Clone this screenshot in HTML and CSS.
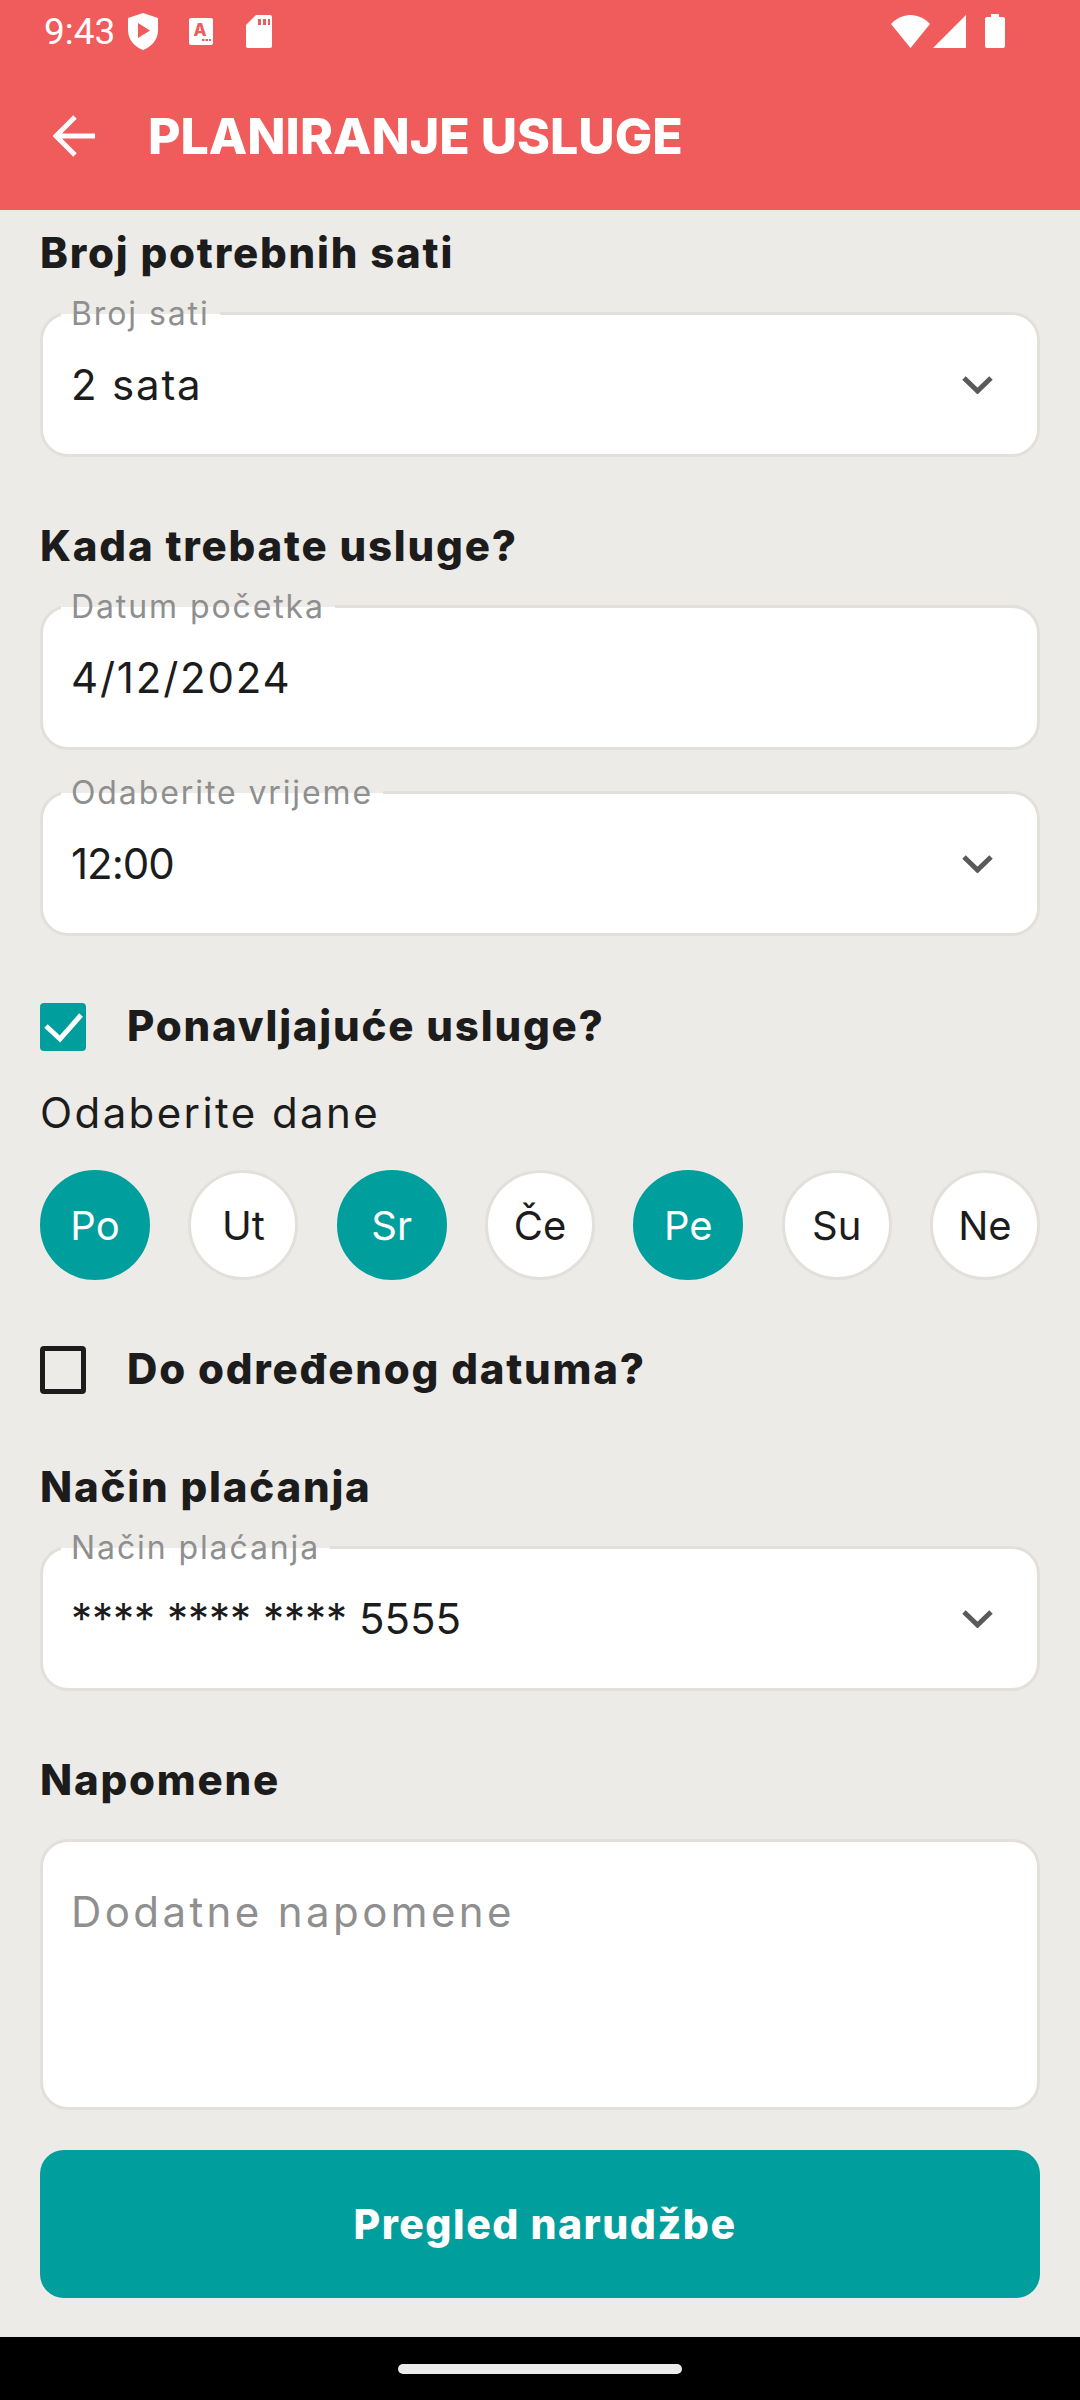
FILE: index.html
```html
<!DOCTYPE html>
<html lang="hr">
<head>
  <meta charset="UTF-8" />
  <meta name="viewport" content="width=device-width, initial-scale=1.0" />
  <title>Planiranje usluge</title>
  <link rel="stylesheet" href="styles.css">
</head>
<body>
  <div class="app">
    <header class="top">
      <div class="status">
        <span class="time">9:43</span>
        <svg class="ic-shield" viewBox="0 0 30 37"><path fill="#fff" d="M15 0 L30 5 V17 C30 27 23 34 15 37 C7 34 0 27 0 17 V5 Z"/><path fill="#f05b5b" d="M10 10 L22 17.5 L10 25 Z"/></svg>
        <svg class="ic-a" viewBox="0 0 24 27"><rect width="24" height="27" rx="2" fill="#fff"/><text x="11" y="18" text-anchor="middle" class="ic-a-text">A</text><path fill="#f05b5b" d="M13 21h2.5v2H13zM16.5 21H19v2h-2.5zM20 21h2v2h-2z"/></svg>
        <svg class="ic-sd" viewBox="0 0 26 33"><path fill="#fff" d="M10 0 H24 a2 2 0 0 1 2 2 V31 a2 2 0 0 1 -2 2 H2 a2 2 0 0 1 -2 -2 V10 Z"/><path fill="#f05b5b" d="M12 4h3v6h-3zM17 4h3v6h-3zM22 4h2v6h-2z"/></svg>
        <span class="spacer"></span>
        <svg class="ic-wifi" viewBox="0 0 39 33"><path fill="#fff" d="M19.5 33 L0 9 C5 3.500 12 0 19.500 0 C27 0 34 3.500 39 9 Z"/></svg>
        <svg class="ic-signal" viewBox="0 0 33 33"><path fill="#fff" d="M33 0 V33 H0 Z"/></svg>
        <svg class="ic-battery" viewBox="0 0 20 34"><path fill="#fff" d="M6 0 H14 V3 H18 a2 2 0 0 1 2 2 V32 a2 2 0 0 1 -2 2 H2 a2 2 0 0 1 -2 -2 V5 a2 2 0 0 1 2 -2 H6 Z"/></svg>
      </div>
      <div class="bar">
        <svg class="ic-back" viewBox="0 0 42 42"><path fill="none" stroke="#fff" stroke-width="5" d="M42 21 H4 M22 2 L3 21 L22 40"/></svg>
        <h1>PLANIRANJE USLUGE</h1>
      </div>
    </header>

    <main class="content">
      <h2>Broj potrebnih sati</h2>
      <div class="field">
        <label>Broj sati</label>
        <span class="value spaced">2 sata</span>
        <svg class="chevron" viewBox="0 0 31 18"><path fill="none" stroke="#5a5a5a" stroke-width="5" d="M2 2 L15.500 15 L29 2"/></svg>
      </div>

      <h2 class="sec">Kada trebate usluge?</h2>
      <div class="field">
        <label>Datum početka</label>
        <span class="value spaced">4/12/2024</span>
      </div>
      <div class="field next">
        <label>Odaberite vrijeme</label>
        <span class="value tight">12:00</span>
        <svg class="chevron" viewBox="0 0 31 18"><path fill="none" stroke="#5a5a5a" stroke-width="5" d="M2 2 L15.500 15 L29 2"/></svg>
      </div>

      <div class="check first">
        <span class="box on"><svg viewBox="0 0 46 48"><path fill="none" stroke="#fff" stroke-width="5" d="M6 23 L20 36 L41 12"/></svg></span>
        <span class="check-text">Ponavljajuće usluge?</span>
      </div>
      <p class="days-title">Odaberite dane</p>
      <div class="days">
        <span class="day on">Po</span>
        <span class="day">Ut</span>
        <span class="day on">Sr</span>
        <span class="day">Če</span>
        <span class="day on">Pe</span>
        <span class="day">Su</span>
        <span class="day">Ne</span>
      </div>
      <div class="check second">
        <span class="box"></span>
        <span class="check-text">Do određenog datuma?</span>
      </div>

      <h2 class="sec">Način plaćanja</h2>
      <div class="field">
        <label>Način plaćanja</label>
        <span class="value">**** **** **** 5555</span>
        <svg class="chevron" viewBox="0 0 31 18"><path fill="none" stroke="#5a5a5a" stroke-width="5" d="M2 2 L15.500 15 L29 2"/></svg>
      </div>

      <h2 class="sec">Napomene</h2>
      <div class="notes">Dodatne napomene</div>

      <button class="submit">Pregled narudžbe</button>
    </main>

    <footer class="nav"><span class="home"></span></footer>
  </div>
</body>
</html>
```

FILE: styles.css
```css
* {
  box-sizing: border-box;
}

body {
  margin: 0;
  font-family: Inter, "Noto Sans", sans-serif;
  background: #ecebe7;
  color: #1c1c1c;
}

.app {
  width: 1080px;
  height: 2400px;
  display: flex;
  flex-direction: column;
}

.top {
  height: 210px;
  background: #f05b5b;
}

.status {
  height: 62px;
  padding: 0 75px 0 44px;
  display: flex;
  align-items: center;
}

.time {
  font-family: Roboto, sans-serif;
  font-size: 37px;
  color: #fff;
  margin-right: 13px;
}

.spacer {
  flex: 1;
}

.ic-shield { width: 30px; height: 37px; margin-right: 31px; }
.ic-a { width: 24px; height: 27px; margin-right: 33px; }
.ic-sd { width: 26px; height: 33px; }
.ic-wifi { width: 39px; height: 33px; margin-right: 3px; }
.ic-signal { width: 33px; height: 33px; margin-right: 19px; }
.ic-battery { width: 20px; height: 34px; }

.ic-a-text {
  font-family: Inter, sans-serif;
  font-size: 17px;
  font-weight: 800;
  fill: #f05b5b;
}

.bar {
  height: 148px;
  padding-left: 53px;
  display: flex;
  align-items: center;
}

.ic-back {
  width: 42px;
  height: 42px;
  margin-right: 53px;
}

h1 {
  margin: 0;
  font-size: 50px;
  font-weight: 800;
  color: #fff;
}

.content {
  flex: 1;
  padding: 12px 40px 0;
}

h2 {
  margin: 0 0 28px;
  height: 62px;
  line-height: 62px;
  font-size: 42px;
  font-weight: 800;
  letter-spacing: 1.8px;
}

h2.sec {
  margin-top: 58px;
}

.field {
  position: relative;
  height: 145px;
  padding: 0 28px;
  display: flex;
  align-items: center;
  justify-content: space-between;
  background: #fff;
  border: 3px solid #e3dfda;
  border-radius: 28px;
}

.field.next {
  margin-top: 41px;
}

.field label {
  position: absolute;
  left: 18px;
  top: -15px;
  padding: 0 10px;
  font-size: 32px;
  line-height: 28px;
  letter-spacing: 1.9px;
  color: #8f8f8f;
  background: linear-gradient(#ecebe7 50%, #fff 50%);
}

.value {
  font-size: 42px;
}

.value.spaced {
  letter-spacing: 1.8px;
}

.value.tight {
  letter-spacing: -1px;
}

.chevron {
  width: 31px;
  height: 18px;
  margin-right: 16px;
}

.check {
  display: flex;
  align-items: center;
  gap: 41px;
  height: 48px;
  font-size: 42px;
  font-weight: 800;
  letter-spacing: 1.8px;
}

.check.first { margin-top: 67px; }
.check.second { margin-top: 66px; margin-bottom: 62px; }

.check-text {
  padding-bottom: 3px;
}

.box {
  width: 46px;
  height: 48px;
  border: 5px solid #1c1c1c;
  border-radius: 4px;
}

.box.on {
  border: 0;
  background: #009e9c;
}

.box svg {
  display: block;
  width: 46px;
  height: 48px;
}

.days-title {
  margin: 46px 0 42px;
  font-size: 42px;
  line-height: 31px;
  letter-spacing: 2.4px;
}

.days {
  display: flex;
  justify-content: space-between;
}

.day {
  width: 110px;
  height: 110px;
  display: flex;
  align-items: center;
  justify-content: center;
  font-size: 40px;
  background: #fff;
  border: 3px solid #e3dfda;
  border-radius: 50%;
}

.day.on {
  color: #fff;
  background: #009e9c;
  border-color: #009e9c;
}

.notes {
  height: 271px;
  padding: 44px 28px 0;
  font-size: 42px;
  letter-spacing: 3.4px;
  color: #8f8f8f;
  background: #fff;
  border: 3px solid #e3dfda;
  border-radius: 28px;
}

.submit {
  display: block;
  width: 100%;
  height: 148px;
  margin-top: 40px;
  padding-left: 16px;
  border: 0;
  border-radius: 24px;
  font-family: inherit;
  font-size: 41px;
  font-weight: 800;
  letter-spacing: 1.5px;
  color: #fff;
  background: #009e9c;
}

.nav {
  height: 63px;
  background: #000;
  display: flex;
  justify-content: center;
  padding-top: 27px;
}

.home {
  width: 284px;
  height: 10px;
  border-radius: 5px;
  background: #ececec;
}
```
